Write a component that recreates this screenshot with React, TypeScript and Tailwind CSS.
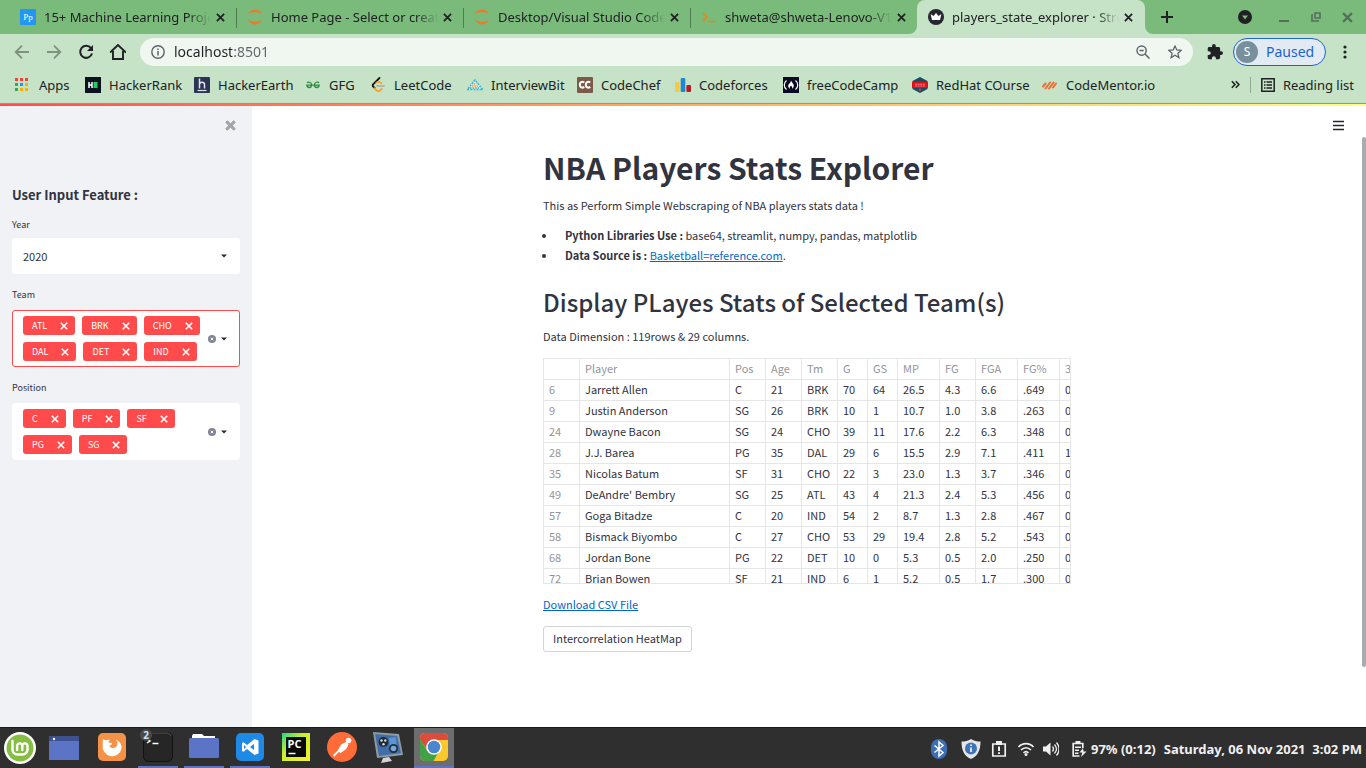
import React from "react";

type IconProps = { className?: string };

const Svg = ({ size = 16, vb = "0 0 16 16", children, className = "" }: { size?: number; vb?: string; children: React.ReactNode; className?: string }) => (
  <svg width={size} height={size} viewBox={vb} className={`shrink-0 ${className}`} fill="none" aria-hidden="true">
    {children}
  </svg>
);

const Cross = ({ size = 9, width = 2, className = "" }: { size?: number; width?: number } & IconProps) => (
  <Svg size={size} vb="0 0 10 10" className={className}>
    <path d="M1 1l8 8M9 1L1 9" stroke="currentColor" strokeWidth={width} />
  </Svg>
);

const ProjectIcon = () => (
  <Svg>
    <rect width="16" height="16" rx="1" fill="#2196f3" />
    <text x="8" y="11" textAnchor="middle" fontSize="9" fill="#fff" fontFamily="Liberation Serif, serif">Pp</text>
  </Svg>
);
const JupyterIcon = () => (
  <Svg>
    <path d="M1 5.400C2.400 2 5 .6 8 .6s5.600 1.400 7 4.800C13 3.700 10.600 3 8 3S3 3.700 1 5.400z" fill="#f37726" />
    <path d="M1 10.600C2.400 14 5 15.400 8 15.400s5.600-1.400 7-4.800c-2 1.700-4.400 2.400-7 2.400s-5-.7-7-2.400z" fill="#f37726" />
  </Svg>
);
const PromptIcon = () => (
  <Svg>
    <path d="M2 4l4 4-4 4" stroke="#f0820f" strokeWidth="1.600" />
    <path d="M7 12.500h8" stroke="#f0820f" strokeWidth="1.400" />
  </Svg>
);
const CrownIcon = () => (
  <Svg>
    <circle cx="8" cy="8" r="8" fill="#262730" />
    <path d="M2.600 5l2.900 2L8 4l2.500 3 2.900-2-1.400 6H4z" fill="#fff" />
  </Svg>
);

const AppsIcon = () => (
  <Svg size={16}>
    {["#f44336", "#f44336", "#f44336", "#34a853", "#2196f3", "#fbb000", "#34a853", "#fbb000", "#fbb000"].map((c, i) => (
      <rect key={i} x={(i % 3) * 5} y={Math.floor(i / 3) * 5 + 1} width="3" height="3" fill={c} />
    ))}
  </Svg>
);
const HackerRankIcon = () => (
  <Svg>
    <rect width="16" height="16" fill="#0b1220" />
    <path d="M4 5v6M7 5v6M4 8h3" stroke="#fff" strokeWidth="1.500" />
    <rect x="8.500" y="5" width="4" height="6" fill="#1fd15c" />
  </Svg>
);
const HackerEarthIcon = () => (
  <Svg>
    <rect width="16" height="16" rx="1" fill="#2c3454" />
    <path d="M5.500 1.500v10M5.500 7.500c0-3 5-3 5 0v4" stroke="#dfe3ee" strokeWidth="1.500" />
    <path d="M3.500 13.500h9" stroke="#dfe3ee" strokeWidth="1.200" />
  </Svg>
);
const GfgIcon = () => (
  <Svg>
    <path d="M2 5.800c1-1.200 4.600-1 4.600 2.200S2.200 11.400 1.800 8.200h12.400c-.4 3.200-4.800 3-4.800-.2s3.600-3.400 4.600-2.200" stroke="#2f8d46" strokeWidth="1.300" />
  </Svg>
);
const LeetCodeIcon = () => (
  <Svg>
    <path d="M9.500 1L3.300 7.200c-.8.8-.8 1.600 0 2.400l1.500 1.600" stroke="#111" strokeWidth="1.800" strokeLinecap="round" />
    <path d="M4.500 11.200l2 2.200c1 1 2.800 1 3.800 0l1.500-1.500M6.500 5.500c2-1 3.500-.7 5 .7" stroke="#ffa116" strokeWidth="1.800" strokeLinecap="round" />
    <path d="M7 9h7" stroke="#b3b3b3" strokeWidth="1.800" strokeLinecap="round" />
  </Svg>
);
const InterviewBitIcon = () => (
  <Svg>
    <path d="M8 2.500L0 13h16z" fill="#eaf7f5" />
    <path d="M8 3L.5 12.500h15z" stroke="#35b5c9" strokeWidth="1.600" strokeDasharray="2 1" />
    <path d="M5 9h6M6.500 7h3" stroke="#f39a3c" strokeWidth="1.700" strokeDasharray="1.600 .7" />
    <path d="M3 11h10" stroke="#35b5c9" strokeWidth="1.500" strokeDasharray="1.600 .9" />
  </Svg>
);
const CodeChefIcon = () => (
  <Svg>
    <rect width="16" height="16" rx="1" fill="#7b5b48" />
    <path d="M7.300 5.500C5 4 2.800 5.200 2.800 7.700s2.200 3.800 4.500 2.200M13.300 5.500C11 4 8.800 5.200 8.800 7.700s2.200 3.800 4.500 2.200" stroke="#fff" strokeWidth="2" />
  </Svg>
);
const CodeforcesIcon = () => (
  <Svg>
    <rect x="0" y="5" width="4.600" height="10" rx="1" fill="#f6c945" />
    <rect x="5.700" y="1" width="4.600" height="14" rx="1" fill="#1e88cf" />
    <rect x="11.400" y="8" width="4.600" height="7" rx="1" fill="#b71c24" />
  </Svg>
);
const FccIcon = () => (
  <Svg>
    <rect width="16" height="16" fill="#0a0a23" />
    <path d="M3.500 3.500c-3 2.500-3 6.500 0 9M12.500 3.500c3 2.500 3 6.500 0 9" stroke="#fff" strokeWidth="1.200" />
    <path d="M8 3.500c.4 2 2.800 3 2.800 5.300 0 1.500-.9 2.500-1.700 2.900.4-1.200-.1-2.200-1.100-2.900-1 .7-1.500 1.700-1.100 2.900-.8-.4-1.700-1.400-1.700-2.900C5.200 7 7.800 6 8 3.500z" fill="#fff" />
  </Svg>
);
const RedHatIcon = () => (
  <Svg>
    <path d="M8 0l7.500 4v8L8 16 .5 12V4z" fill="#174f63" />
    <path d="M0 5h16v6H0z" fill="#e0101c" />
    <path d="M3 7.200h10M3 9h10" stroke="#f7a6a8" strokeWidth=".8" strokeDasharray="2 .6" />
    <circle cx="8" cy="12.800" r="1.300" fill="#d8343c" />
  </Svg>
);
const CodeMentorIcon = () => (
  <Svg>
    <path d="M1 9.500l2.500-3M3.500 11.500l4.500-6M7 11.500l4.500-6M11 10.500l3-4" stroke="#f26b30" strokeWidth="2" strokeLinecap="round" />
  </Svg>
);

const tabs = [
  { title: "15+ Machine Learning Projec", Icon: ProjectIcon },
  { title: "Home Page - Select or create", Icon: JupyterIcon },
  { title: "Desktop/Visual Studio Code", Icon: JupyterIcon },
  { title: "shweta@shweta-Lenovo-V14", Icon: PromptIcon },
  { title: "players_state_explorer · Stre", Icon: CrownIcon, active: true },
];

const bookmarks = [
  { name: "Apps", Icon: AppsIcon, w: "w-[70px]" },
  { name: "HackerRank", Icon: HackerRankIcon, w: "w-[109px]" },
  { name: "HackerEarth", Icon: HackerEarthIcon, w: "w-[111px]" },
  { name: "GFG", Icon: GfgIcon, w: "w-[65px]" },
  { name: "LeetCode", Icon: LeetCodeIcon, w: "w-[97px]" },
  { name: "InterviewBit", Icon: InterviewBitIcon, w: "w-[110px]" },
  { name: "CodeChef", Icon: CodeChefIcon, w: "w-[98px]" },
  { name: "Codeforces", Icon: CodeforcesIcon, w: "w-[108px]" },
  { name: "freeCodeCamp", Icon: FccIcon, w: "w-[129px]" },
  { name: "RedHat COurse", Icon: RedHatIcon, w: "w-[130px]" },
  { name: "CodeMentor.io", Icon: CodeMentorIcon, w: "w-[120px]" },
];

function TabStrip() {
  return (
    <div className="flex h-[34px] items-stretch bg-[#7abb7c] pl-[9px]">
      {tabs.map(({ title, Icon, active }, i) => (
        <div
          key={title}
          className={`relative flex w-[228px] shrink-0 items-center pr-3 pl-[11px] not-first:-ml-px ${active ? "rounded-t-lg bg-[#c6e2c7]" : ""}`}
        >
          <Icon />
          <span className="ml-2 w-[168px] overflow-hidden whitespace-nowrap text-[13px] leading-5 [mask-image:linear-gradient(90deg,#000_144px,transparent_167px)]">
            {title}
          </span>
          <button aria-label={`Close ${title}`} className="ml-auto">
            <Cross size={9} width={2} />
          </button>
          {!active && i < 3 && <span className="absolute top-2 right-0 h-5 w-px bg-[#4d7d50]" />}
          {active && (
            <>
              <svg className="absolute bottom-0 -left-2" width="8" height="8" aria-hidden="true">
                <path d="M8 0v8H0a8 8 0 0 0 8-8z" fill="#c6e2c7" />
              </svg>
              <svg className="absolute -right-2 bottom-0" width="8" height="8" aria-hidden="true">
                <path d="M0 0v8h8a8 8 0 0 1-8-8z" fill="#c6e2c7" />
              </svg>
            </>
          )}
        </div>
      ))}
      <button aria-label="New tab" className="ml-4">
        <Svg size={12} vb="0 0 12 12">
          <path d="M6 0v12M0 6h12" stroke="#202124" strokeWidth="2" />
        </Svg>
      </button>
      <div className="ml-auto flex items-center pr-[13px]">
        <button aria-label="Search tabs" className="mr-[26px]">
          <Svg size={14} vb="0 0 14 14">
            <circle cx="7" cy="7" r="7" fill="#202124" />
            <path d="M4 5.500h6L7 9.500z" fill="#7abb7c" />
          </Svg>
        </button>
        <button aria-label="Minimize" className="mr-5 text-[#54705a]">
          <Svg size={12} vb="0 0 12 12">
            <path d="M1 10h10" stroke="currentColor" strokeWidth="2" />
          </Svg>
        </button>
        <button aria-label="Restore" className="mr-5 text-[#54705a]">
          <Svg size={12} vb="0 0 12 12">
            <path d="M5 2h5v5H5zM3 4H2v6h6V9" stroke="currentColor" strokeWidth="1.600" />
          </Svg>
        </button>
        <button aria-label="Close window" className="text-[#54705a]">
          <Cross size={11} width={2} />
        </button>
      </div>
    </div>
  );
}

function Toolbar() {
  return (
    <div className="flex h-9 items-center bg-[#c6e2c7] pr-[17px] pl-[14px]">
      <button aria-label="Back" className="mr-4 text-[#7f927f]">
        <Svg size={16}>
          <path d="M15 8H2M8 1.700L1.700 8 8 14.300" stroke="currentColor" strokeWidth="1.800" />
        </Svg>
      </button>
      <button aria-label="Forward" className="mr-4 text-[#7f927f]">
        <Svg size={16}>
          <path d="M1 8h13M8 1.700L14.300 8 8 14.300" stroke="currentColor" strokeWidth="1.800" />
        </Svg>
      </button>
      <button aria-label="Reload" className="mr-4">
        <Svg size={16}>
          <path d="M13 4.200A6 6 0 1 0 14 9.500" stroke="#202124" strokeWidth="2" />
          <path d="M15 1v6H9z" fill="#202124" />
        </Svg>
      </button>
      <button aria-label="Home" className="mr-[14px]">
        <Svg size={16}>
          <path d="M0 8.500L8 1l8 7.500M3 7v8h10V7" stroke="#202124" strokeWidth="1.900" />
        </Svg>
      </button>
      <div className="flex h-7 flex-1 items-center rounded-full bg-[#f0f7f1] px-[11px] text-[#5f6368]">
        <Svg size={14} vb="0 0 14 14">
          <circle cx="7" cy="7" r="6.200" stroke="currentColor" strokeWidth="1.400" />
          <path d="M7 6v4.500M7 3.500v1.400" stroke="currentColor" strokeWidth="1.500" />
        </Svg>
        <input
          aria-label="Address"
          defaultValue="localhost:8501"
          className="ml-[9px] min-w-0 flex-1 bg-[linear-gradient(90deg,#202124_58px,#5f6368_58px)] bg-clip-text text-sm leading-5 text-transparent outline-none"
        />
        <button aria-label="Zoom" className="mr-[18px]">
          <Svg size={14} vb="0 0 14 14">
            <circle cx="5.600" cy="5.600" r="4.600" stroke="currentColor" strokeWidth="1.400" />
            <path d="M9 9l4.500 4.500M3.500 5.600h4.200" stroke="currentColor" strokeWidth="1.500" />
          </Svg>
        </button>
        <button aria-label="Bookmark this page">
          <Svg size={14} vb="0 0 14 14">
            <path d="M7 1l1.800 4 4.400.4-3.300 2.900 1 4.300L7 10.300l-3.900 2.300 1-4.300L.8 5.400 5.200 5z" stroke="currentColor" strokeWidth="1.300" />
          </Svg>
        </button>
      </div>
      <button aria-label="Extensions" className="ml-[14px]">
        <Svg size={16} vb="1 1 22 22">
          <path fill="#202124" d="M20.500 11H19V7c0-1.100-.9-2-2-2h-4V3.500a2.500 2.500 0 0 0-5 0V5H4c-1.100 0-1.990.9-1.990 2v3.800H3.500c1.490 0 2.700 1.210 2.700 2.700s-1.210 2.700-2.700 2.700H2V20c0 1.100.9 2 2 2h3.800v-1.500c0-1.490 1.210-2.700 2.700-2.700s2.700 1.210 2.700 2.700V22H17c1.100 0 2-.9 2-2v-4h1.500a2.500 2.500 0 0 0 0-5z" />
        </Svg>
      </button>
      <button className="ml-[10px] flex h-7 w-[93px] items-center rounded-full border border-[#1a63d2] bg-[#e2ebf3] pl-0.5 text-[#1a63d2]">
        <span className="flex size-[22px] items-center justify-center rounded-full bg-[#78909c] text-xs text-white">S</span>
        <span className="ml-2 text-sm leading-5">Paused</span>
      </button>
      <button aria-label="Menu" className="ml-[13px]">
        <Svg size={14} vb="0 0 14 14" className="-mr-1">
          <circle cx="6" cy="2" r="1.600" fill="#202124" />
          <circle cx="6" cy="7" r="1.600" fill="#202124" />
          <circle cx="6" cy="12" r="1.600" fill="#202124" />
        </Svg>
      </button>
    </div>
  );
}

function BookmarksBar() {
  return (
    <nav className="flex h-[34px] items-center border-b border-[#83a08a] bg-[#c6e2c7] pr-3 pb-1 pl-[15px] text-[13px] leading-5">
      {bookmarks.map(({ name, Icon, w }) => (
        <a key={name} href="#" className={`flex shrink-0 items-center gap-2 whitespace-nowrap ${w}`}>
          <Icon />
          {name}
        </a>
      ))}
      <button aria-label="More bookmarks" className="ml-auto">
        <Svg size={9} vb="0 0 9 9">
          <path d="M.8 1.200L4 4.500.8 7.800M4.800 1.200L8 4.500 4.800 7.800" stroke="#202124" strokeWidth="1.600" />
        </Svg>
      </button>
      <span className="mx-[10px] h-4 w-px bg-[#8fa992]" />
      <a href="#" className="flex items-center gap-2 whitespace-nowrap">
        <Svg size={14} vb="0 0 14 14">
          <path d="M.8.800h12.400v12.400H.8z" stroke="#202124" strokeWidth="1.500" />
          <path d="M3 4h1.500M3 7h1.500M3 10h1.500M5.500 4H11M5.500 7H11M5.500 10H11" stroke="#202124" strokeWidth="1.400" />
        </Svg>
        Reading list
      </a>
    </nav>
  );
}

const Caret = () => (
  <svg width="6" height="4" viewBox="0 0 6 4" className="shrink-0" aria-hidden="true">
    <path d="M0 .5h6L3 3.500z" fill="#262730" />
  </svg>
);

function MultiSelect({ id, label, values, focused }: { id: string; label: string; values: string[]; focused?: boolean }) {
  return (
    <div className="mt-3">
      <label htmlFor={id} className="block text-[9px] leading-[18px]">
        {label}
      </label>
      <div
        className={`mt-[6px] flex items-center rounded-[3px] border bg-white py-[5px] pr-3 pl-[10px] ${focused ? "border-[#ff4b4b]" : "border-white"}`}
      >
        <div className="flex flex-1 flex-wrap gap-x-[7px] gap-y-[7px]">
          {values.map((v) => (
            <span key={v} className="flex h-[19px] items-center gap-[13px] rounded-[3px] bg-[#ff4b4b] pr-[7px] pl-[9px] text-[9px] leading-[18px] text-white">
              {v}
              <button aria-label={`Remove ${v}`}>
                <Cross size={8} width={2} />
              </button>
            </span>
          ))}
          <input id={id} className="h-[18px] w-px outline-none" />
        </div>
        <button aria-label={`Clear ${label}`} className="mr-[5px]">
          <Svg size={8} vb="0 0 8 8">
            <circle cx="4" cy="4" r="4" fill="#808495" />
            <path d="M2.700 2.700l2.600 2.600M5.300 2.700L2.700 5.300" stroke="#fff" strokeWidth="1" />
          </Svg>
        </button>
        <Caret />
      </div>
    </div>
  );
}

function Sidebar() {
  return (
    <aside className="w-[252px] shrink-0 bg-[#f0f2f6] px-3">
      <div className="flex justify-end pt-[14px] pr-1">
        <button aria-label="Close sidebar" className="text-[#a3a5ab]">
          <Cross size={11} width={2.800} className="rounded" />
        </button>
      </div>
      <h2 className="mt-[54px] text-[13px] leading-5 font-bold">User Input Feature :</h2>
      <label htmlFor="year" className="mt-[11px] block text-[9px] leading-[18px]">
        Year
      </label>
      <div className="relative mt-1">
        <select id="year" className="block h-9 w-full appearance-none rounded-[3px] bg-white pl-[11px] text-[11px] leading-5 outline-none">
          <option>2020</option>
        </select>
        <span className="pointer-events-none absolute top-4 right-[13px]">
          <Caret />
        </span>
      </div>
      <MultiSelect id="team" label="Team" values={["ATL", "BRK", "CHO", "DAL", "DET", "IND"]} focused />
      <MultiSelect id="position" label="Position" values={["C", "PF", "SF", "PG", "SG"]} />
    </aside>
  );
}

const columns = [
  { name: "", w: "w-9" },
  { name: "Player", w: "w-[150px]" },
  { name: "Pos", w: "w-9" },
  { name: "Age", w: "w-9" },
  { name: "Tm", w: "w-9" },
  { name: "G", w: "w-[30px]" },
  { name: "GS", w: "w-[30px]" },
  { name: "MP", w: "w-[42px]" },
  { name: "FG", w: "w-9" },
  { name: "FGA", w: "w-[42px]" },
  { name: "FG%", w: "w-[42px]" },
  { name: "3P", w: "w-[42px]" },
];

const rows = [
  ["6", "Jarrett Allen", "C", "21", "BRK", "70", "64", "26.5", "4.3", "6.6", ".649", "0.0"],
  ["9", "Justin Anderson", "SG", "26", "BRK", "10", "1", "10.7", "1.0", "3.8", ".263", "0.6"],
  ["24", "Dwayne Bacon", "SG", "24", "CHO", "39", "11", "17.6", "2.2", "6.3", ".348", "0.6"],
  ["28", "J.J. Barea", "PG", "35", "DAL", "29", "6", "15.5", "2.9", "7.1", ".411", "1.1"],
  ["35", "Nicolas Batum", "SF", "31", "CHO", "22", "3", "23.0", "1.3", "3.7", ".346", "0.8"],
  ["49", "DeAndre' Bembry", "SG", "25", "ATL", "43", "4", "21.3", "2.4", "5.3", ".456", "0.4"],
  ["57", "Goga Bitadze", "C", "20", "IND", "54", "2", "8.7", "1.3", "2.8", ".467", "0.2"],
  ["58", "Bismack Biyombo", "C", "27", "CHO", "53", "29", "19.4", "2.8", "5.2", ".543", "0.0"],
  ["68", "Jordan Bone", "PG", "22", "DET", "10", "0", "5.3", "0.5", "2.0", ".250", "0.2"],
  ["72", "Brian Bowen", "SF", "21", "IND", "6", "1", "5.2", "0.5", "1.7", ".300", "0.0"],
];

function StatsTable() {
  return (
    <div className="h-[226px] overflow-hidden border border-[#e6e6e9]">
      <table className="w-[558px] table-fixed border-separate border-spacing-0 text-left text-[11px] leading-[18px]">
        <thead>
          <tr>
            {columns.map(({ name, w }) => (
              <th key={name} scope="col" className={`h-[21px] overflow-hidden border-r border-b border-[#e6e6e9] pb-0.5 pl-[5px] font-normal text-[#93949b] ${w}`}>
                {name}
              </th>
            ))}
          </tr>
        </thead>
        <tbody>
          {rows.map((row) => (
            <tr key={row[0]}>
              <th scope="row" className="h-[21px] border-r border-b border-[#e6e6e9] pb-0.5 pl-[5px] font-normal text-[#93949b]">
                {row[0]}
              </th>
              {row.slice(1).map((cell, i) => (
                <td key={i} className="h-[21px] border-r border-b border-[#e6e6e9] pb-0.5 pl-[5px] whitespace-nowrap">
                  {cell}
                </td>
              ))}
            </tr>
          ))}
        </tbody>
      </table>
    </div>
  );
}

function MainContent() {
  return (
    <main className="flex min-w-0 flex-1 bg-white">
      <div className="relative min-w-0 flex-1 overflow-hidden">
        <button aria-label="App menu" className="absolute top-[14px] right-[18px]">
          <Svg size={11} vb="0 0 11 11">
            <path d="M0 1.500h11M0 5.500h11M0 9.500h11" stroke="#262730" strokeWidth="1.300" />
          </Svg>
        </button>
        <div className="mx-auto max-w-[552px] px-3 pt-[38px] text-[11px] leading-5">
          <h1 className="text-[30px] leading-[46px] font-bold">NBA Players Stats Explorer</h1>
          <p className="mt-[5px]">This as Perform Simple Webscraping of NBA players stats data !</p>
          <ul className="mt-[10px] list-disc">
            <li className="ml-[14px] pl-2">
              <b>Python Libraries Use :</b> base64, streamlit, numpy, pandas, matplotlib
            </li>
            <li className="ml-[14px] pl-2">
              <b>Data Source is :</b>{" "}
              <a href="#" className="text-[#0068c9] underline">Basketball=reference.com</a>.
            </li>
          </ul>
          <h2 className="mt-4 text-[24px] leading-[42px] font-medium">Display PLayes Stats of Selected Team(s)</h2>
          <p className="mt-[3px] mb-3">Data Dimension : 119rows &amp; 29 columns.</p>
          <StatsTable />
          <p className="mt-[10px]">
            <a href="#" className="text-[#0068c9] underline">Download CSV File</a>
          </p>
          <button className="mt-3 h-[26px] rounded-[3px] border border-[#d3d4d8] px-[9px] pb-0.5">Intercorrelation HeatMap</button>
        </div>
      </div>
      <div className="w-1 pt-[31px]">
        <div className="h-[530px] rounded-full bg-[#a9abb0]" />
      </div>
    </main>
  );
}

const MintIcon = () => (
  <Svg size={32} vb="0 0 32 32">
    <circle cx="16" cy="16" r="16" fill="#fff" />
    <circle cx="16" cy="16" r="13.500" fill="#86be43" />
    <path d="M8.500 9v8.500a5 5 0 0 0 5 5h5a5 5 0 0 0 5-5v-3.500a2.600 2.600 0 0 0-5.200 0v4M18.300 14a2.600 2.600 0 0 0-5.200 0v4" stroke="#fff" strokeWidth="2.400" strokeLinecap="round" />
  </Svg>
);
const WindowIcon = () => (
  <Svg size={30} vb="0 0 30 30">
    <path d="M0 3h30v24H0z" fill="#5b74c6" />
    <path d="M0 3h30v5H0z" fill="#3d5190" />
    <circle cx="5" cy="6" r="1.200" fill="#fff" />
  </Svg>
);
const FirefoxIcon = () => (
  <Svg size={30} vb="0 0 30 30">
    <rect x="1" y="1" width="28" height="28" rx="5" fill="#f69245" />
    <path d="M6 7c1 .4 2 .9 2.700 1.600C10 7.500 12 7.600 13 8c-1 .5-1.500 1.500-1.500 2.500l3.500.5c0 1.500-1 2-2.500 2.500.5 2.500 4 3.500 6.500 1.500 2-1.600 2-5 0-7.500 3.500 1.500 6 5 5.500 9A9.500 9.500 0 1 1 5.800 13C5.600 11 5.500 9 6 7z" fill="#fff" />
  </Svg>
);
const TerminalIcon = () => (
  <Svg size={30} vb="0 0 30 30">
    <rect x=".5" y=".5" width="29" height="29" rx="5" fill="#262626" stroke="#111" />
    <path d="M2 4a4 4 0 0 1 4-3h18a4 4 0 0 1 4 3" stroke="#555" />
    <path d="M4 7l3 2-3 2M9.500 11.500h6" stroke="#fff" strokeWidth="1.500" />
  </Svg>
);
const FolderIcon = () => (
  <Svg size={30} vb="0 0 30 30">
    <path d="M3 4l1-2h9l2 2h11v4H3z" fill="#fff" />
    <rect y="6" width="30" height="20" rx="1.500" fill="#5b74c6" />
  </Svg>
);
const CodeEditorIcon = () => (
  <Svg size={30} vb="0 0 30 30">
    <rect x="1" y="1" width="28" height="28" rx="5" fill="#1e8ae6" />
    <path fillRule="evenodd" d="M19.500 7l4 1.500v13l-4 1.500-7.500-6-3.500 2.800L7 19v-8l1.500-.8 3.500 2.800zM19 12l-4 3 4 3zM9 13v4l2-2z" fill="#fff" />
  </Svg>
);
const PyCharmIcon = () => (
  <Svg size={30} vb="0 0 30 30">
    <defs>
      <linearGradient id="pc" x1="0" y1="0" x2="1" y2="1">
        <stop offset="0" stopColor="#21d789" />
        <stop offset=".4" stopColor="#c9ef2c" />
        <stop offset="1" stopColor="#f7f12f" />
      </linearGradient>
    </defs>
    <path d="M1 1h28v28H1z" fill="url(#pc)" />
    <path d="M5 5h20v20H5z" fill="#0a0a0a" />
    <text x="6.500" y="15.500" fontSize="11" fontWeight="700" fill="#fff" fontFamily="Open Sans, sans-serif">PC</text>
    <path d="M7.500 21.500h7" stroke="#fff" strokeWidth="1.500" />
  </Svg>
);
const PostmanIcon = () => (
  <Svg size={30} vb="0 0 30 30">
    <circle cx="15" cy="15" r="15" fill="#ff6c37" />
    <path d="M6.500 24l8-8M12 18l3-5 4-2 1.500 1.500-2 4-5 3.500z" stroke="#fff" strokeWidth="1.800" fill="#fff" />
    <circle cx="21.500" cy="8.500" r="2.800" fill="#fff" />
  </Svg>
);
const MediaIcon = () => (
  <Svg size={32} vb="0 0 32 32">
    <path d="M1 1l26 2 4 21-26 3z" fill="#8f9aa3" />
    <path d="M3 3l22 2 4 17-22 3z" fill="#3f6ea8" />
    <circle cx="11.500" cy="11" r="5" fill="#222c38" />
    <g fill="#d5dde6">
      <circle cx="9.500" cy="9.500" r="1.200" />
      <circle cx="13.300" cy="9.500" r="1.200" />
      <circle cx="11.500" cy="13.200" r="1.200" />
    </g>
    <path d="M17 7l7-1 1 14-7 1z" fill="#5c95cf" />
    <circle cx="21.500" cy="17.500" r="4.500" fill="#222c38" />
    <circle cx="21.500" cy="17.500" r="2.800" fill="#7aa8da" />
    <path d="M11 27l6-1 3 4-11 2z" fill="#d4d4d4" />
  </Svg>
);
const ChromeIcon = () => (
  <Svg size={30} vb="0 0 30 30">
    <defs>
      <clipPath id="chrome-clip">
        <rect x="1" y="1" width="28" height="28" rx="5" />
      </clipPath>
    </defs>
    <g clipPath="url(#chrome-clip)">
      <path d="M0 0h30v30H0z" fill="#fbc82d" />
      <path d="M0 0h30v8H15L8.500 18 0 6z" fill="#dd4b3e" />
      <path d="M0 5l8.500 14L15 22l4-1-5 9H0z" fill="#43a047" />
    </g>
    <circle cx="15" cy="15" r="7.800" fill="#fff" />
    <circle cx="15" cy="15" r="6.300" fill="#4a86cf" />
  </Svg>
);

const apps = [
  { name: "Firefox", Icon: FirefoxIcon },
  { name: "Terminal", Icon: TerminalIcon, open: true, count: 2 },
  { name: "Files", Icon: FolderIcon, open: true },
  { name: "Visual Studio Code", Icon: CodeEditorIcon, open: true },
  { name: "PyCharm", Icon: PyCharmIcon },
  { name: "Postman", Icon: PostmanIcon },
  { name: "Multimedia", Icon: MediaIcon },
  { name: "Chrome", Icon: ChromeIcon, open: true, current: true },
];

function Taskbar() {
  return (
    <footer className="flex h-[41px] shrink-0 items-stretch border-t border-[#1c1c1c] bg-[#2f2f2f] text-[#f0f0f0]">
      <button aria-label="Menu" className="flex w-10 items-center justify-center">
        <MintIcon />
      </button>
      <button aria-label="Show desktop" className="mx-1 flex w-10 items-center justify-center">
        <WindowIcon />
      </button>
      <div className="ml-1 flex gap-[6px]">
        {apps.map(({ name, Icon, open, count, current }) => (
          <button
            key={name}
            aria-label={name}
            className={`relative flex w-10 items-center justify-center border-b-2 ${open ? "border-[#5b74c6]" : "border-transparent"} ${current ? "bg-[#6d6d6d]" : ""}`}
          >
            <Icon />
            {count && (
              <span className="absolute top-px left-0.5 flex size-3 items-center justify-center rounded-full bg-[#4a4a4a] text-[10px] leading-3 font-bold text-[#cfe0f5]">
                {count}
              </span>
            )}
          </button>
        ))}
      </div>
      <div className="ml-auto flex items-center pt-0.5 pr-1 text-[13px] leading-5 font-bold whitespace-nowrap">
        <Svg size={20} vb="0 0 20 20" className="mr-3">
          <rect x="2" width="16" height="20" rx="8" fill="#3c6eb4" />
          <path d="M5.500 6.500l8.500 7-4 3.500V3l4 3.500-8.500 7" stroke="#fff" strokeWidth="1.500" />
        </Svg>
        <Svg size={20} vb="0 0 20 20" className="mr-[10px]">
          <path d="M10 0c3 2 6 2.500 9.500 2.500C19.500 11 17 17 10 20 3 17 .5 11 .5 2.500 4 2.500 7 2 10 0z" fill="#e6e6e6" />
          <circle cx="10" cy="9.500" r="6" fill="#3f74b8" />
          <path d="M10 8.500v4.500M10 5.500v1.500" stroke="#fff" strokeWidth="1.600" />
        </Svg>
        <Svg size={16} className="mr-[10px]">
          <path d="M1.800 3h12.400v12H1.800z" stroke="currentColor" strokeWidth="1.700" />
          <path d="M5 0h6v4H5z" fill="currentColor" />
          <path d="M8 5.500v4.500M8 11.200v1.800" stroke="currentColor" strokeWidth="2" />
        </Svg>
        <Svg size={18} vb="0 0 18 18" className="mr-2">
          <path d="M1.500 7c4-4.500 11-4.500 15 0M4 10c3-3 7-3 10 0M6.500 12.800c1.500-1.500 3.500-1.500 5 0" stroke="currentColor" strokeWidth="1.700" />
          <circle cx="9" cy="14.500" r="1.500" fill="currentColor" />
        </Svg>
        <Svg size={16} className="mr-3">
          <path d="M0 5.500h3L7.500 1.500v13L3 10.500H0z" fill="currentColor" />
          <path d="M9.500 5.500c1.200 1.500 1.200 3.500 0 5M11.500 3.500c2.400 2.700 2.400 6.300 0 9M13.500 1.500c3.200 4 3.200 9 0 13" stroke="currentColor" strokeWidth="1.300" />
        </Svg>
        <Svg size={16} className="mr-1">
          <path d="M8.500 15H2.200V2.500h9.600V7" stroke="currentColor" strokeWidth="1.700" />
          <path d="M4.500 0h5v3h-5zM4 5.500h6v1.500H4zM4 8.500h4V10H4zM4 11.500h3.500V13H4z" fill="currentColor" />
          <path d="M12 7l-3.500 4.500h2.800L10 16l5.500-5.500h-3z" fill="currentColor" />
        </Svg>
        <span className="mr-2">97% (0:12)</span>
        <span className="whitespace-pre">{"Saturday, 06 Nov 2021  3:02 PM"}</span>
      </div>
    </footer>
  );
}

export default function App() {
  return (
    <div className="flex min-h-screen flex-col font-['Noto_Sans',sans-serif] text-[#202124]">
      <header>
        <TabStrip />
        <Toolbar />
        <BookmarksBar />
      </header>
      <div className="h-0.5 bg-linear-to-r from-[#ff4b4b] to-[#fffd80]" />
      <div className="flex flex-1 font-['Noto_Sans_CJK_SC',sans-serif] text-[#31333f]">
        <Sidebar />
        <MainContent />
      </div>
      <Taskbar />
    </div>
  );
}
